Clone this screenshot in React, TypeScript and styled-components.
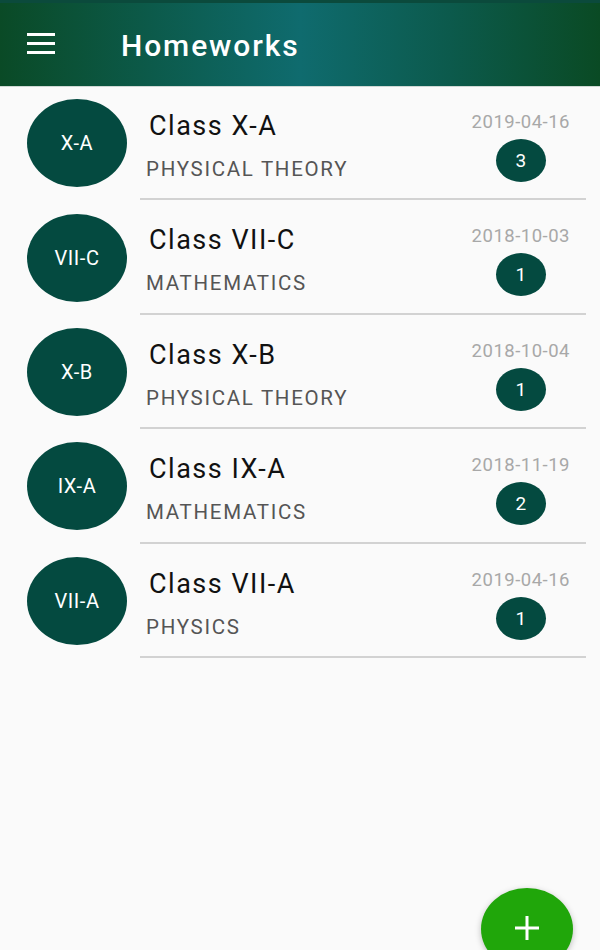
import React from "react";
import styled, { createGlobalStyle } from "styled-components";

const GlobalStyle = createGlobalStyle`
  html, body { margin: 0; padding: 0; }
  body {
    background: #fafafa;
    font-family: Roboto, "Liberation Sans", sans-serif;
    overflow: hidden;
  }
`;

const Screen = styled.div`
  position: relative;
  width: 600px;
  height: 950px;
  background: #fafafa;
  overflow: hidden;
`;

const Header = styled.header`
  height: 83px;
  border-top: 3px solid #0b4a3c;
  display: flex;
  align-items: center;
  background: linear-gradient(90deg, #0a4a26 0%, #0c5a4a 25%, #0f6b6e 50%, #0c5a4c 75%, #0a4a24 100%);
  box-shadow: 0 1px 0 #cfd8d4;
`;

const MenuButton = styled.div`
  width: 28px;
  margin-left: 27px;
  display: flex;
  flex-direction: column;
  gap: 6px;
  margin-top: -2px;

  span {
    display: block;
    height: 3px;
    background: #fff;
  }
`;

const Title = styled.h1`
  margin: 0 0 0 66px;
  color: #fff;
  font-size: 30px;
  font-weight: 500;
  letter-spacing: 1.9px;
  margin-top: 1px;
`;

const List = styled.div`
  display: flex;
  flex-direction: column;
`;

const Row = styled.div`
  height: 114.4px;
  display: flex;
  align-items: stretch;
`;

const AvatarCol = styled.div`
  width: 140px;
  display: flex;
  align-items: center;
  justify-content: center;
  padding-left: 14px;
  box-sizing: border-box;
`;

const Avatar = styled.div`
  width: 100px;
  height: 88px;
  border-radius: 50%;
  background: #044a40;
  color: #fff;
  font-size: 20px;
  letter-spacing: 0.6px;
  display: flex;
  align-items: center;
  justify-content: center;
`;

const Body = styled.div`
  flex: 1;
  margin-right: 14px;
  border-bottom: 2px solid #d2d2d2;
  display: flex;
  justify-content: space-between;
`;

const TextCol = styled.div`
  display: flex;
  flex-direction: column;
  padding-top: 22px;
`;

const ClassName = styled.div`
  font-size: 27px;
  color: #111;
  margin-left: 9px;
  line-height: 36px;
  letter-spacing: 1.5px;
`;

const Subject = styled.div`
  margin-top: 13px;
  font-size: 20.5px;
  color: #555;
  margin-left: 6px;
  letter-spacing: 1.7px;
`;

const MetaCol = styled.div`
  display: flex;
  flex-direction: column;
  align-items: center;
  padding-top: 24px;
  padding-right: 16px;
`;

const DateText = styled.div`
  font-size: 18.5px;
  color: #a8a8a8;
  line-height: 24px;
  letter-spacing: 0.5px;
`;

const Badge = styled.div`
  margin-top: 5px;
  width: 50px;
  height: 43px;
  border-radius: 50%;
  background: #044a40;
  color: #fff;
  font-size: 19px;
  display: flex;
  align-items: center;
  justify-content: center;
`;

const Fab = styled.button`
  position: absolute;
  left: 481px;
  top: 888px;
  width: 92px;
  height: 82px;
  border-radius: 50%;
  border: none;
  background: #20a60a;
  box-shadow: 0 2px 6px rgba(0, 0, 0, 0.25);
  display: flex;
  align-items: flex-start;
  justify-content: center;
  padding-top: 27px;
  box-sizing: border-box;
`;

const items = [
  { code: "X-A", name: "Class X-A", subject: "PHYSICAL THEORY", date: "2019-04-16", count: 3 },
  { code: "VII-C", name: "Class VII-C", subject: "MATHEMATICS", date: "2018-10-03", count: 1 },
  { code: "X-B", name: "Class X-B", subject: "PHYSICAL THEORY", date: "2018-10-04", count: 1 },
  { code: "IX-A", name: "Class IX-A", subject: "MATHEMATICS", date: "2018-11-19", count: 2 },
  { code: "VII-A", name: "Class VII-A", subject: "PHYSICS", date: "2019-04-16", count: 1 },
];

export default function App() {
  return (
    <Screen>
      <GlobalStyle />
      <Header>
        <MenuButton>
          <span />
          <span />
          <span />
        </MenuButton>
        <Title>Homeworks</Title>
      </Header>
      <List>
        {items.map((it) => (
          <Row key={it.name}>
            <AvatarCol>
              <Avatar>{it.code}</Avatar>
            </AvatarCol>
            <Body>
              <TextCol>
                <ClassName>{it.name}</ClassName>
                <Subject>{it.subject}</Subject>
              </TextCol>
              <MetaCol>
                <DateText>{it.date}</DateText>
                <Badge>{it.count}</Badge>
              </MetaCol>
            </Body>
          </Row>
        ))}
      </List>
      <Fab aria-label="add">
        <svg width="26" height="26" viewBox="0 0 26 26">
          <path d="M13 1v24M1 13h24" stroke="#fff" strokeWidth="3" />
        </svg>
      </Fab>
    </Screen>
  );
}
